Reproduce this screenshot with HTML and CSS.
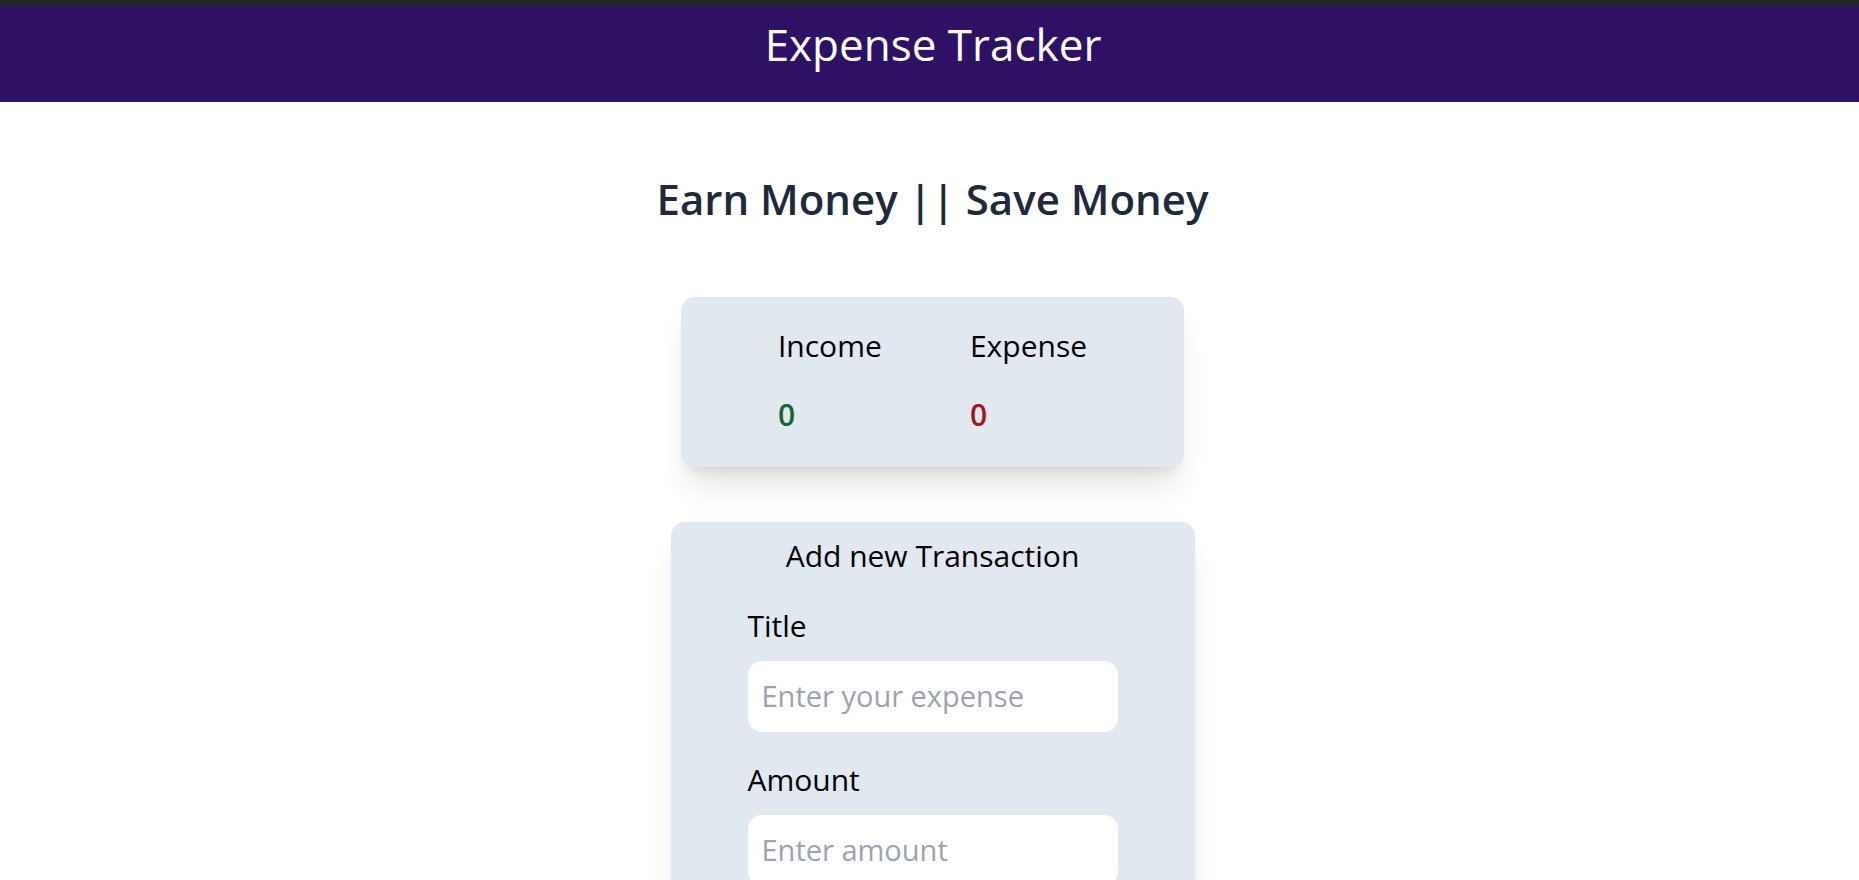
FILE: index.html
```html
<!DOCTYPE html>
<html lang="en">
<head>
<meta charset="utf-8">
<title>Expense Tracker</title>
<link rel="stylesheet" href="styles.css">
</head>
<body>
<div class="topstrip"></div>
<header class="navbar">
  <h1 class="brand">Expense Tracker</h1>
</header>
<main class="page">
  <h2 class="tagline">Earn Money || Save Money</h2>
  <section class="summary">
    <div class="stat">
      <p class="stat-label">Income</p>
      <p class="stat-value income">0</p>
    </div>
    <div class="stat">
      <p class="stat-label">Expense</p>
      <p class="stat-value expense">0</p>
    </div>
  </section>
  <section class="form-card">
    <h3 class="form-title">Add new Transaction</h3>
    <form class="form">
      <label class="field">
        <span class="field-label">Title</span>
        <input class="field-input" type="text" placeholder="Enter your expense">
      </label>
      <label class="field">
        <span class="field-label">Amount</span>
        <input class="field-input" type="text" placeholder="Enter amount">
      </label>
    </form>
  </section>
</main>
</body>
</html>
```
FILE: styles.css
```css
* { box-sizing: border-box; }
html, body { margin: 0; padding: 0; }
body {
  font-family: "Open Sans", "Noto Sans", sans-serif;
  background: #ffffff;
  color: #000;
  overflow: hidden;
}
.topstrip {
  height: 7px;
  background: #212529;
}
.navbar {
  height: 95px;
  background: #2e1065;
  display: flex;
  justify-content: center;
  padding-left: 7px;
  padding-top: 13px;
}
.brand {
  margin: 0;
  color: #ffffff;
  font-weight: 400;
  font-size: 44px;
  line-height: 48px;
}
.page {
  display: flex;
  flex-direction: column;
  align-items: center;
  padding-left: 6px;
}
.tagline {
  margin: 69px 0 0;
  font-size: 42px;
  line-height: 56px;
  font-weight: 600;
  color: #1e293b;
}
.summary {
  margin-top: 70px;
  width: 503px;
  height: 170px;
  background: #e2e8f0;
  border-radius: 14px;
  box-shadow: 0 24px 30px -6px rgba(0,0,0,0.10), 0 10px 12px -7px rgba(0,0,0,0.10);
  display: flex;
  justify-content: center;
  gap: 80px;
  padding-top: 29px;
}
.stat { display: flex; flex-direction: column; }
.stat-label {
  margin: 0;
  font-size: 30px;
  line-height: 40px;
  font-weight: 400;
}
.stat-value {
  margin: 29px 0 0;
  font-size: 30px;
  line-height: 40px;
  font-weight: 600;
}
.stat:first-child { width: 112px; }
.income { color: #166534; }
.expense { color: #991b1b; }
.form-card {
  margin-top: 55px;
  width: 524px;
  height: 420px;
  background: #e2e8f0;
  border-radius: 14px;
  box-shadow: 0 24px 30px -6px rgba(0,0,0,0.10), 0 10px 12px -7px rgba(0,0,0,0.10);
  display: flex;
  flex-direction: column;
  align-items: center;
  padding-top: 14px;
}
.form-title {
  margin: 0;
  font-size: 30px;
  line-height: 40px;
  font-weight: 400;
}
.form {
  margin-top: 30px;
  width: 370px;
  display: flex;
  flex-direction: column;
  gap: 28px;
}
.field { display: flex; flex-direction: column; gap: 15px; }
.field-label {
  font-size: 30px;
  line-height: 40px;
}
.field-input {
  width: 370px;
  height: 71px;
  border: none;
  border-radius: 14px;
  background: #ffffff;
  padding: 0 14px 3px;
  font-family: inherit;
  font-size: 29px;
  color: #000;
  outline: none;
}
.field-input::placeholder { color: #9ca3af; }
```
